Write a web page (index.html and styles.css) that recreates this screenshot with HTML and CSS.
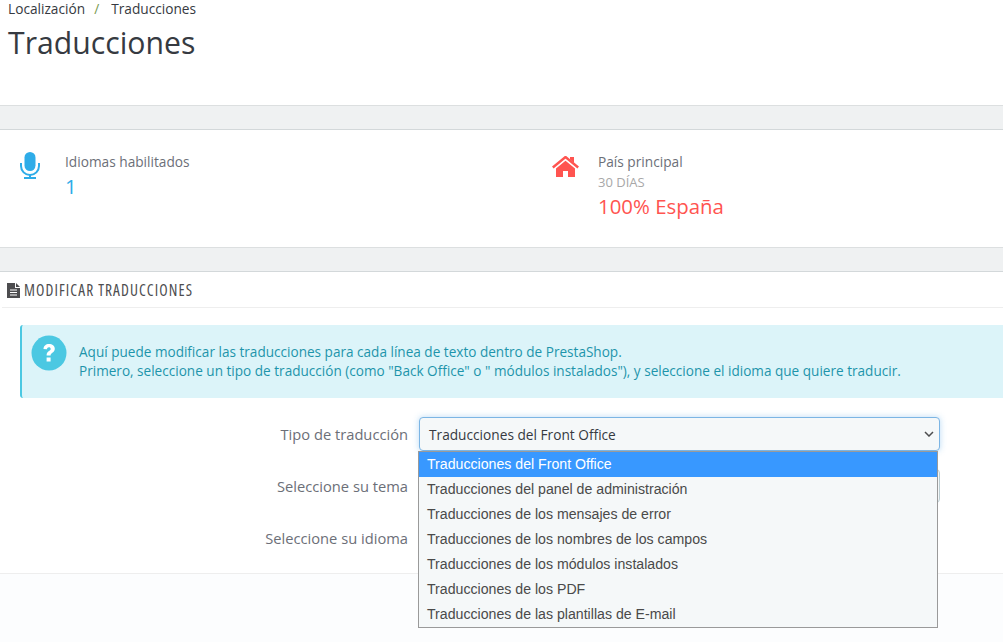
FILE: index.html
```html
<!DOCTYPE html>
<html>
<head>
    <title>Traducciones</title>
    <link rel="stylesheet" href="styles.css">
</head>
<body>
<div class="page-head">
    <div class="breadcrumb">
        <span>Localización</span>
        <span class="sep">/</span>
        <span>Traducciones</span>
    </div>
    <h1>Traducciones</h1>
</div>

<div class="band"></div>

<div class="kpis">
    <div class="kpi">
        <svg class="kpi-icon" width="20" height="27" viewBox="0 0 20 27">
            <rect x="4.500" y="0" width="11" height="19" rx="5.500" fill="#2eace8"/>
            <path d="M1 11v3a9 9 0 0 0 18 0v-3" fill="none" stroke="#2eace8" stroke-width="2"/>
            <path d="M10 23v2.500M4 26h12" fill="none" stroke="#2eace8" stroke-width="2"/>
        </svg>
        <div class="kpi-text">
            <div class="kpi-title">Idiomas habilitados</div>
            <div class="kpi-value blue">1</div>
        </div>
    </div>
    <div class="kpi">
        <svg class="kpi-icon" width="27" height="22" viewBox="0 0 27 22">
            <path d="M18 1h4v6l-4-3.500z" fill="#ff5450"/>
            <path d="M0.800 11.500L13.500 1l12.700 10.500" fill="none" stroke="#ff5450" stroke-width="2.400"/>
            <path d="M4 12.500L13.500 4.800 23 12.500V21h-7v-6h-5v6H4z" fill="#ff5450"/>
        </svg>
        <div class="kpi-text">
            <div class="kpi-title">País principal</div>
            <div class="kpi-sub">30 DÍAS</div>
            <div class="kpi-value red">100% España</div>
        </div>
    </div>
</div>

<div class="band"></div>

<div class="panel-heading">
    <svg width="14" height="15" viewBox="0 0 14 15">
        <path d="M0 0h8v5h5v10H0z" fill="#4d4d4f"/>
        <path d="M9 0l4 4H9z" fill="#4d4d4f"/>
        <path d="M3 7h7M3 9.500h7M3 12h7" stroke="#fff" stroke-width="1"/>
    </svg>
    <span>MODIFICAR TRADUCCIONES</span>
</div>

<div class="alert">
    <svg class="alert-icon" width="36" height="36" viewBox="0 0 36 36">
        <circle cx="18" cy="18" r="17.500" fill="#4bc8e2"/>
        <path d="M12.500 14c0-3 2.300-5 5.500-5 3.300 0 5.800 2 5.800 4.800 0 4-4.200 3.900-4.200 6.700h-4c0-4.700 4.100-4.700 4.100-6.600 0-1-.8-1.600-1.800-1.600-1.100 0-1.800.7-1.900 1.900z" fill="#fff"/>
        <rect x="15.600" y="22.500" width="4" height="4" fill="#fff"/>
    </svg>
    <p>Aquí puede modificar las traducciones para cada línea de texto dentro de PrestaShop.<br>Primero, seleccione un tipo de traducción (como "Back Office" o " módulos instalados"), y seleccione el idioma que quiere traducir.</p>
</div>

<form class="form">
    <div class="form-row top">
        <label>Tipo de traducción</label>
        <div class="select-wrap">
            <div class="select focus">
                <span>Traducciones del Front Office</span>
                <svg width="10" height="6" viewBox="0 0 10 6"><path d="M1 1l4 4 4-4" fill="none" stroke="#4d4d4f" stroke-width="1.500"/></svg>
            </div>
            <ul class="dropdown">
                <li class="active">Traducciones del Front Office</li>
                <li>Traducciones del panel de administración</li>
                <li>Traducciones de los mensajes de error</li>
                <li>Traducciones de los nombres de los campos</li>
                <li>Traducciones de los módulos instalados</li>
                <li>Traducciones de los PDF</li>
                <li>Traducciones de las plantillas de E-mail</li>
            </ul>
        </div>
    </div>
    <div class="form-row">
        <label>Seleccione su tema</label>
        <div class="select-wrap">
            <div class="select"></div>
        </div>
    </div>
    <div class="form-row">
        <label>Seleccione su idioma</label>
        <div class="select-wrap short">
            <div class="select"></div>
        </div>
    </div>
</form>

<div class="panel-footer"></div>
</body>
</html>
```

FILE: styles.css
```css
html, body {
    height: 100%;
}
body {
    margin: 0;
    font-family: "Open Sans", sans-serif;
    font-size: 13.700px;
    color: #363a41;
    background: #fff;
    display: flex;
    flex-direction: column;
    overflow: hidden;
}
svg {
    display: block;
    flex: none;
}
.page-head {
    height: 105px;
    flex: none;
    padding-left: 8px;
    box-sizing: border-box;
}
.breadcrumb {
    display: flex;
    height: 19px;
    line-height: 18px;
    color: #363a41;
}
.breadcrumb .sep {
    margin: 0 12px 0 9px;
    color: #7a9a50;
}
h1 {
    margin: 3px 0 0;
    font-size: 30.200px;
    font-weight: 400;
    line-height: 41px;
}
.band {
    height: 23px;
    flex: none;
    background: #eff1f2;
    border-top: 1px solid #dcdfe0;
    border-bottom: 1px solid #d3d8da;
}
.kpis {
    height: 117px;
    flex: none;
    display: flex;
    box-sizing: border-box;
    padding-top: 22px;
}
.kpi {
    display: flex;
    width: 532px;
    padding-left: 20px;
    box-sizing: border-box;
}
.kpi:last-child {
    flex: 1;
}
.kpi-icon {
    margin-right: 25px;
}
.kpi:last-child .kpi-icon {
    margin: 4px 19px 0 0;
}
.kpi-title {
    line-height: 20px;
    color: #6c6f78;
}
.kpi-sub {
    font-size: 13px;
    line-height: 20px;
    color: #a8a8a8;
}
.kpi-value {
    font-size: 20.400px;
    line-height: 28px;
}
.blue {
    color: #2eace8;
}
.red {
    color: #ff5450;
}
.panel-heading {
    height: 36px;
    flex: none;
    margin-left: 2px;
    padding: 2px 0 0 5px;
    box-sizing: border-box;
    display: flex;
    align-items: center;
    gap: 3px;
    border-bottom: 1px solid #eeeeee;
    font-size: 15.400px;
    font-stretch: 85%;
    letter-spacing: 1.080px;
    color: #4d4d4f;
}
.alert {
    flex: none;
    height: 73px;
    margin: 17px 0 0 20px;
    padding-left: 9px;
    box-sizing: border-box;
    display: flex;
    background: #dcf4f9;
    border-left: 2px solid #4bc8e2;
    border-radius: 3px 0 0 3px;
}
.alert-icon {
    margin: 10px 12px 0 0;
}
.alert p {
    margin: 17px 0 0;
    font-size: 13.580px;
    line-height: 19px;
    color: #1e94ab;
    white-space: nowrap;
}
.form {
    flex: none;
    height: 176px;
    padding-top: 19px;
    box-sizing: border-box;
    display: flex;
    flex-direction: column;
    gap: 18px;
    border-bottom: 1px solid #eeeeee;
}
.form-row {
    display: flex;
    height: 34px;
    align-items: center;
}
.form-row.top {
    position: relative;
    z-index: 2;
}
label {
    width: 408px;
    margin-right: 11px;
    text-align: right;
    font-size: 14.700px;
    color: #6c6f78;
}
.select-wrap {
    width: 521px;
    position: relative;
}
.select-wrap.short {
    width: 500px;
}
.select {
    height: 34px;
    box-sizing: border-box;
    display: flex;
    align-items: center;
    justify-content: space-between;
    padding: 0 5px 0 9px;
    background: #f5f8f9;
    border: 1px solid #bbcdd2;
    border-radius: 4px;
    color: #363a41;
}
.select.focus {
    border-color: #7cb5e4;
    box-shadow: 0 0 6px rgba(102, 175, 233, 0.450);
}
.dropdown {
    position: absolute;
    left: -1px;
    top: 34px;
    width: 520px;
    box-sizing: border-box;
    margin: 0;
    padding: 0;
    list-style: none;
    background: #f5f8f9;
    border: 1px solid #9a9a9a;
    font-family: "Liberation Sans", Arial, sans-serif;
    font-size: 14.150px;
    color: #4a4a4a;
}
.dropdown li {
    height: 25px;
    line-height: 25px;
    padding-left: 8px;
}
.dropdown li.active {
    background: #3898ff;
    color: #fff;
}
.panel-footer {
    flex: 1;
    background: #fcfdfe;
}
```
